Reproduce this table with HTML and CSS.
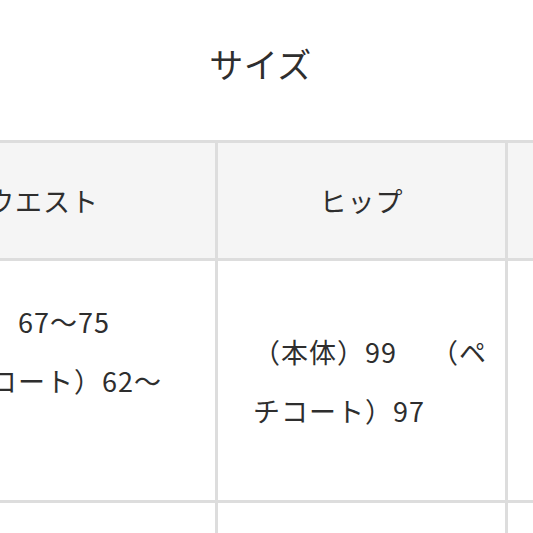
FILE: index.html
```html
<!DOCTYPE html>
<html lang="ja">
<head>
<meta charset="utf-8">
<link rel="stylesheet" href="styles.css">
</head>
<body>
<div class="page">
  <h1 class="title">サイズ</h1>
  <div class="table">
    <div class="cell head">ウエスト</div>
    <div class="cell head">ヒップ</div>
    <div class="cell head">着丈</div>
    <div class="cell body"><p class="text">（本体）67〜75<br>（ペチコート）62〜<br>68</p></div>
    <div class="cell body"><p class="text">（本体）99　<span class="sp"></span>（ペ<br>チコート）97</p></div>
    <div class="cell body"><p class="text">（本体）80</p></div>
    <div class="cell body"></div>
    <div class="cell body"></div>
    <div class="cell body"></div>
  </div>
</div>
</body>
</html>
```

FILE: styles.css
```css
html, body {
  margin: 0;
  padding: 0;
  background: #ffffff;
}
body {
  width: 533px;
  height: 533px;
  overflow: hidden;
  font-family: "Noto Sans CJK JP", "Noto Sans", sans-serif;
  color: #2e2e2e;
}
.page {
  display: flex;
  flex-direction: column;
}
.title {
  margin: 0;
  height: 140px;
  display: flex;
  align-items: center;
  justify-content: center;
  font-size: 34px;
  font-weight: 400;
  line-height: 1;
  letter-spacing: 0.5px;
  padding: 0 12px 12px 0;
  box-sizing: border-box;
}
.table {
  margin-left: -129px;
  display: grid;
  grid-template-columns: 344px 287px 287px;
  grid-template-rows: 115px 239px 120px;
  gap: 3px;
  padding: 3px 0;
  background: #dddddd;
  width: max-content;
}
.cell {
  display: flex;
  align-items: center;
  box-sizing: border-box;
}
.head {
  background: #f5f5f5;
  justify-content: center;
  font-size: 27px;
  letter-spacing: 1px;
}
.body {
  background: #ffffff;
  padding: 0 20px 0 35px;
}
.text {
  margin: 0;
  font-size: 27px;
  line-height: 59px;
  letter-spacing: 1px;
  white-space: nowrap;
}
.sp {
  display: inline-block;
  width: 6px;
}
```
